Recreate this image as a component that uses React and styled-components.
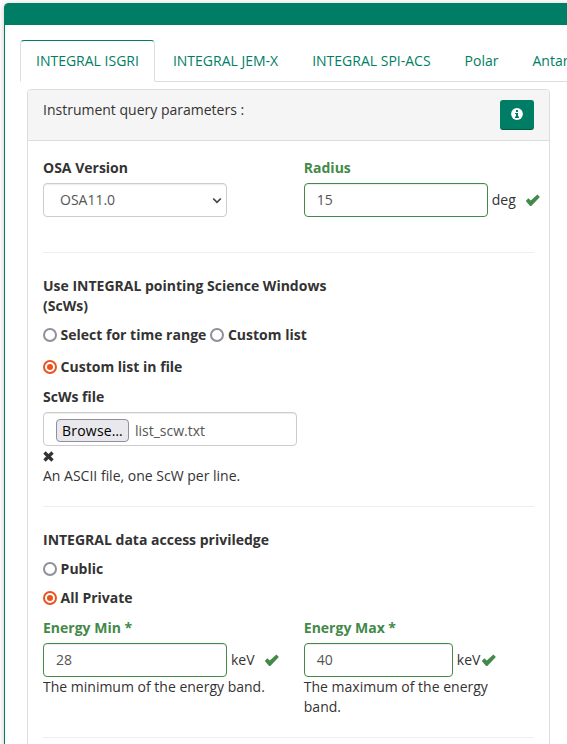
import React from "react";
import styled, { createGlobalStyle } from "styled-components";

const GREEN = "#007e65";
const VALID = "#43894a";

const GlobalStyle = createGlobalStyle`
  *, *::before, *::after { box-sizing: border-box; }
  html, body { margin: 0; background: #fff; }
  body {
    height: 744px;
    overflow: hidden;
    color: #333;
    font: 14px/20px "Open Sans", "Noto Sans", sans-serif;
  }
`;

const Page = styled.main`
  height: 744px;
  padding: 3px 0 0 4px;
  overflow: hidden;
`;

const OuterPanel = styled.section`
  width: 640px;
  height: 780px;
  border: 1px solid ${GREEN};
  border-radius: 4px;
  box-shadow: 0 1px 6px rgba(0, 0, 0, 0.22);
`;

const OuterHeading = styled.header`
  height: 21px;
  background: ${GREEN};
  border-radius: 2px 2px 0 0;
`;

const OuterBody = styled.div`
  padding: 15px 0 0 15px;
`;

const Tabs = styled.nav`
  display: flex;
  height: 42px;
  border-bottom: 1px solid #ddd;
  white-space: nowrap;
`;

const Tab = styled.a`
  height: 42px;
  margin-right: 2px;
  padding: 10px 15px;
  color: ${GREEN};
  border: 1px solid transparent;
  border-radius: 4px 4px 0 0;
  text-decoration: none;
  ${({ $active }) =>
    $active &&
    `
    background: #fff;
    border-color: #ddd;
    border-top-color: ${GREEN};
    border-bottom-color: transparent;
  `}
`;

const QueryPanel = styled.section`
  width: 523px;
  height: 700px;
  margin: 7px 0 0 7px;
  border: 1px solid #ddd;
  border-radius: 4px;
`;

const QueryHeading = styled.header`
  display: flex;
  justify-content: space-between;
  height: 51px;
  padding: 10px 15px;
  background: #f5f5f5;
  border-bottom: 1px solid #ddd;
  border-radius: 3px 3px 0 0;
`;

const InfoButton = styled.button`
  display: flex;
  align-items: center;
  justify-content: center;
  width: 34px;
  height: 30px;
  padding: 0 0 2px;
  color: #fff;
  background: ${GREEN};
  border: 1px solid ${GREEN};
  border-bottom-color: #005a48;
  border-radius: 3px;
`;

const QueryBody = styled.form`
  padding: 17px 15px 0;
`;

const Section = styled.div`
  height: ${({ $height }) => $height}px;
  margin-bottom: ${({ $gap }) => $gap}px;
  border-bottom: 1px solid #eee;
`;

const Columns = styled.div`
  display: grid;
  grid-template-columns: 260.8px 1fr;
`;

const Field = styled.div`
  min-width: 0;
`;

const Label = styled.label`
  display: block;
  margin-bottom: 5px;
  font-weight: 700;
  color: ${({ $valid }) => ($valid ? VALID : "#333")};
`;

const Title = styled.h2`
  width: 300px;
  margin: 0 0 9px;
  font: inherit;
  font-weight: 700;
`;

const Help = styled.div`
  max-width: ${({ $width }) => $width}px;
`;

const ControlRow = styled.div`
  display: flex;
  align-items: center;
`;

const Control = styled.div`
  display: flex;
  flex: none;
  align-items: center;
  width: ${({ $width }) => $width}px;
  height: 34px;
  padding: 0 12px;
  color: #555;
  border: 1px solid ${({ $valid }) => ($valid ? VALID : "#ccc")};
  border-radius: 4px;
  box-shadow: inset 0 1px 1px rgba(0, 0, 0, 0.075);
`;

const SelectControl = styled(Control)`
  justify-content: space-between;
  padding: 0 4px 0 16px;
`;

const Unit = styled.span`
  margin: 0 ${({ $gap }) => $gap}px 0 4px;
`;

const RadioRow = styled.div`
  display: flex;
  gap: 4px;
  height: 20px;
  margin-bottom: ${({ $gap }) => $gap}px;
  font-weight: 700;
  white-space: nowrap;
`;

const RadioLabel = styled.label`
  display: flex;
  align-items: center;
  gap: 3.6px;
`;

const RadioMark = styled.span`
  display: grid;
  place-items: center;
  width: 14px;
  height: 14px;
  border: 2px solid ${({ $on }) => ($on ? "#e95420" : "#8f8f9d")};
  border-radius: 50%;

  &::after {
    content: "";
    width: 6px;
    height: 6px;
    border-radius: 50%;
    background: ${({ $on }) => ($on ? "#e95420" : "transparent")};
  }
`;

const BrowseButton = styled.button`
  width: 73px;
  height: 23px;
  margin-right: 6px;
  padding: 0;
  color: #000;
  background: #e9e9ed;
  border: 1px solid #8f8f9d;
  border-radius: 4px;
  font: inherit;
  letter-spacing: 0.2px;
`;

const FileName = styled.span`
  line-height: 20px;
`;

const FileControl = styled(Control)`
  padding-top: 3px;
`;

const ClearRow = styled.div`
  display: flex;
  align-items: center;
  height: 20px;
`;

const Icon = styled.svg`
  display: block;
  flex: none;
`;

const Check = () => (
  <Icon width="16" height="14" viewBox="0 0 16 14" fill={VALID}>
    <path d="M.8 7.9 3.3 5.3 5.8 7.6 12.4 1.5 14.9 4 6.3 12.9 5.1 12.9Z" />
  </Icon>
);

const Cross = () => (
  <Icon width="11" height="11" viewBox="0 0 11 11">
    <path d="M1.5 1.5 9.5 9.5M9.5 1.5 1.5 9.5" stroke="#333" strokeWidth="3.3" />
  </Icon>
);

const Info = () => (
  <Icon width="12" height="12" viewBox="0 0 12 12">
    <circle cx="6" cy="6" r="5.9" fill="#fff" />
    <path d="M5 2h2v2H5zM4 5h3v3.6h1V10H4V8.6h1V6H4z" fill={GREEN} />
  </Icon>
);

const Chevron = () => (
  <Icon width="10" height="7" viewBox="0 0 10 7">
    <path d="M1.2 1.5 5 5.3 8.8 1.5" fill="none" stroke="#444" strokeWidth="1.7" />
  </Icon>
);

const Radio = ({ on, children }) => (
  <RadioLabel>
    <RadioMark $on={on} />
    {children}
  </RadioLabel>
);

const ValueField = ({ label, value, unit, width, gap, help, helpWidth }) => (
  <Field>
    <Label $valid>{label}</Label>
    <ControlRow>
      <Control $valid $width={width}>{value}</Control>
      <Unit $gap={gap}>{unit}</Unit>
      <Check />
    </ControlRow>
    {help && <Help $width={helpWidth}>{help}</Help>}
  </Field>
);

const tabs = ["INTEGRAL ISGRI", "INTEGRAL JEM-X", "INTEGRAL SPI-ACS", "Polar", "Antares"];

export default function App() {
  return (
    <Page>
      <GlobalStyle />
      <OuterPanel>
        <OuterHeading />
        <OuterBody>
          <Tabs>
            {tabs.map((name, i) => (
              <Tab key={name} $active={i === 0}>{name}</Tab>
            ))}
          </Tabs>
          <QueryPanel>
            <QueryHeading>
              Instrument query parameters :
              <InfoButton type="button" aria-label="Information"><Info /></InfoButton>
            </QueryHeading>
            <QueryBody>
              <Section $height={95} $gap={23}>
                <Columns>
                  <Field>
                    <Label>OSA Version</Label>
                    <SelectControl $width={184}>OSA11.0<Chevron /></SelectControl>
                  </Field>
                  <ValueField label="Radius" value="15" unit="deg" width={184} gap={9} />
                </Columns>
              </Section>
              <Section $height={231} $gap={23}>
                <Title>Use INTEGRAL pointing Science Windows (ScWs)</Title>
                <RadioRow $gap={12}>
                  <Radio>Select for time range</Radio>
                  <Radio>Custom list</Radio>
                </RadioRow>
                <RadioRow $gap={10}><Radio on>Custom list in file</Radio></RadioRow>
                <Label>ScWs file</Label>
                <FileControl $width={254}>
                  <BrowseButton type="button">Browse…</BrowseButton>
                  <FileName>list_scw.txt</FileName>
                </FileControl>
                <ClearRow><Cross /></ClearRow>
                An ASCII file, one ScW per line.
              </Section>
              <Section $height={208} $gap={0}>
                <Title>INTEGRAL data access priviledge</Title>
                <RadioRow $gap={9}><Radio>Public</Radio></RadioRow>
                <RadioRow $gap={10}><Radio on>All Private</Radio></RadioRow>
                <Columns>
                  <ValueField label="Energy Min *" value="28" unit="keV" width={184} gap={9} help="The minimum of the energy band." helpWidth={231} />
                  <ValueField label="Energy Max *" value="40" unit="keV" width={149} gap={0.7} help="The maximum of the energy band." helpWidth={200} />
                </Columns>
              </Section>
            </QueryBody>
          </QueryPanel>
        </OuterBody>
      </OuterPanel>
    </Page>
  );
}
